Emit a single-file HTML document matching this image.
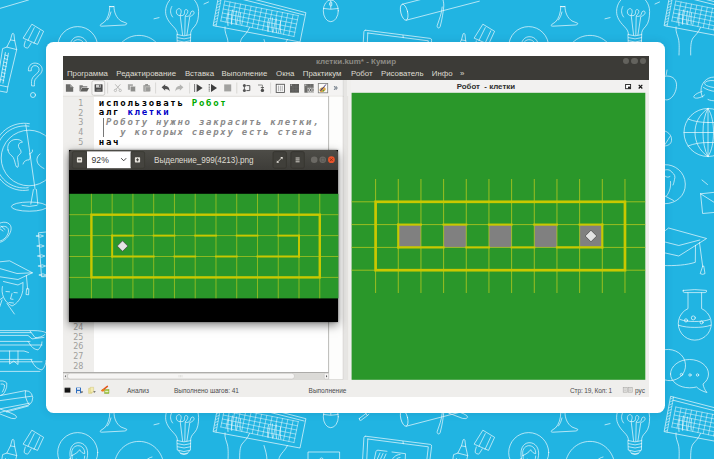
<!DOCTYPE html>
<html lang="ru">
<head>
<meta charset="utf-8">
<title>клетки.kum* - Кумир</title>
<style>
html,body{margin:0;padding:0;}
body{width:714px;height:459px;overflow:hidden;background:#21b4e2;position:relative;font-family:"Liberation Sans","DejaVu Sans",sans-serif;}
.abs{position:absolute;}
#doodles{position:absolute;left:0;top:0;width:714px;height:459px;}
#card{position:absolute;left:46px;top:42px;width:619px;height:371px;background:#fff;border-radius:7.5px;box-shadow:0 0 8px rgba(0,40,80,.13);}
#shot{position:absolute;left:63px;top:56px;width:586px;height:341.2px;background:#efeeec;overflow:hidden;}
/* coordinates inside #shot are page coords minus (63,56) */
#titlebar{position:absolute;left:0;top:0;width:586px;height:12px;background:#3c3b37;}
#title{position:absolute;left:0;top:1px;width:586px;text-align:center;font-size:8px;line-height:10px;color:#8d8b85;font-weight:bold;}
#menubar{position:absolute;left:0;top:12px;width:586px;height:12px;background:#3c3b37;}
#menubar span{position:absolute;top:0;font-size:7.85px;line-height:12px;color:#dfdbd2;white-space:nowrap;}
.wbtn{position:absolute;width:6.4px;height:6.4px;border-radius:50%;background:#63625d;}
#toolbar{position:absolute;left:0;top:24px;width:281px;height:17px;background:#eeedeb;}
#dockgap{position:absolute;left:281px;top:24px;width:8px;height:300px;background:linear-gradient(90deg,#e6e5e3 0,#e6e5e3 3.5px,#f0efed 3.5px);}
#docktitle{position:absolute;left:288px;top:24px;width:298px;height:13px;background:#f2f1f0;}
#docktitle b{position:absolute;left:105.7px;top:0;white-space:nowrap;font-size:7.9px;line-height:13px;color:#2e2e2e;}
#field{position:absolute;left:288.6px;top:36.8px;width:293.7px;height:287px;background:#2a972a;}
#editor{position:absolute;left:0;top:40.5px;width:266px;height:275.9px;background:#fff;}
#gutter{position:absolute;left:0;top:0;width:30.8px;height:276px;background:#efeeec;}
.ln{position:absolute;left:0;width:20.4px;text-align:right;font-family:"DejaVu Sans","Liberation Sans",sans-serif;font-size:8px;line-height:10px;color:#a09f9d;}
.cl{position:absolute;left:35.8px;font-family:"DejaVu Sans Mono","Liberation Mono",monospace;font-weight:bold;font-size:9px;line-height:10px;letter-spacing:1.73px;white-space:pre;color:#000;}
.cl i{color:#8a8a8a;}
.cl .b{color:#0000c8;}
.cl .g{color:#00aa00;}
#statusbar{position:absolute;left:0;top:324px;width:586px;height:17px;background:#efeeec;}
#statusbar span{position:absolute;top:6.2px;font-size:6.5px;line-height:9px;color:#4c4c4c;white-space:nowrap;}
#popup{position:absolute;left:6px;top:94px;width:270px;height:172px;}
#pbg{position:absolute;left:.4px;top:0;width:269px;height:171.8px;background:#000;box-shadow:0 3px 9px rgba(0,0,0,.5),0 0 2px rgba(0,0,0,.45);}
#phead{position:absolute;left:.4px;top:0;width:269px;height:19.5px;background:linear-gradient(#4d4c47,#3d3c38);border-radius:3px 3px 0 0;}
#ptitle{position:absolute;left:84.7px;top:4.6px;font-size:8.2px;line-height:12px;color:#dfdbd2;white-space:nowrap;letter-spacing:-.08px;}
#pgrid{position:absolute;left:0;top:43.8px;width:269px;height:104.6px;background:#2a972a;overflow:hidden;}
</style>
</head>
<body>
<svg id="doodles" viewBox="0 0 714 459" fill="none" stroke="#fff" stroke-width="0.8" stroke-opacity="0.82" stroke-linecap="round" stroke-linejoin="round">
<defs><g id="t">
<!-- marker -->
<path d="M12.4 33.600q1-.9 1.500.500l.8 6.500l2 9l-9.900-2.500l3.600-7.200z"/>
<path d="M10.400 39.900l4.300.7M6.800 47.100l-4.200 1.500l-5.600 36l10.800 2.400l8.900-37.400M-1 85.800l-.8 5l8.800 1.600l.8-5.400M5.400 52.500l-5.400 30M8.400 53.200l-5.400 30"/>
<path d="M5 55l3 1M4.400 58.500l3 1M3.800 62l3 1M3.200 65.500l3 1M2.600 69l3 1M2 72.500l3 1M1.400 76l3 1M.8 79.500l3 1"/>
<!-- usb -->
<path d="M32.200 24.400l11.400 6.900l-6.100 13.100l-14-6.100z"/>
<path d="M34.300 27.600l-6.300 12.600M39.800 30.800l-5.800 12.600M25.300 41l-1.100 4q-.6 2 1.600 2.800q2.200.9 3.200-1.100l2.200-3.900"/>
<!-- question mark -->
<path d="M28.400 70.500c-.6-4 2.600-7.600 6.800-7.400c4.800.2 7.800 4 6.800 8c-.8 3.400-5.400 5.600-7 8.600c-.8 1.600-.6 4.400-.6 6.300l-2.800-.2c-.2-3-.4-5.600 1-8c1.600-2.800 5.800-4.600 6.400-7.200c.6-2.800-1.400-5-4-5c-2.400 0-4.200 2-3.800 4.800z"/>
<circle cx="33" cy="95" r="2.500"/>
<!-- globe -->
<circle cx="29" cy="158" r="27.800"/>
<path d="M29.400 123.700c-16-3-36 8-36.400 33c-.4 24 19 36.500 35.500 33.300M29 126.200c-14-2.400-33 7.500-33.500 30.500c-.5 22 17 33.400 32.700 31"/>
<path d="M25.800 124.600l9.300 64.600M33.400 189.500l-2.600 14.600M36.400 189.500l1.400 14.600"/>
<ellipse cx="29.400" cy="206.600" rx="18" ry="4.600"/><path d="M22 205.400q7 2.200 15 0"/>
<path d="M8 150c-1.500-5 2-10 7-10.500c3-.4 6 .5 7.500 2.500c-3 .5-4.500 2-4 4.500c.5 2.500 3 3.500 2.500 6c-.5 2-3.500 2.500-3.500 5c0 3 1.500 7 .5 9.500c-1 1-2-.5-2.500-2.500c-.8-3-1.500-7-3.500-8.500c-2-1.500-3.500-3-4-6z"/>
<path d="M23 164c1-3 3.500-4.500 6-4c1.500-2 1.500-4.500.5-6.500c2 0 3.500-1.500 3-3.500M40 154c-3 2-4 6-2 9.500c1.500 2.500 4 4 6 5"/>
<!-- mug -->
<path d="M-4 226c4-5 12-5 14.500-.5c2 4-1 10.500-6 14.500c-3 2.400-7 3.400-9.500 2M-2 229c3-3.500 8-3.500 10-.5c1.500 3-.5 7.500-4 10.500c-2 1.600-4.500 2.400-6.500 2M-1 228l4 3M1 226l4 3.500"/>
<!-- spiral notebook -->
<path d="M46 232l-7.500.8l3 44l4.500-.2M36.500 236q4-2.500 7 0q-3 2.500-7 0zM37.200 246q4-2.500 7 0q-3 2.500-7 0zM37.900 256q4-2.500 7 0q-3 2.500-7 0zM38.600 266q4-2.500 7 0q-3 2.500-7 0zM39.300 275q4-2.500 7 0q-3 2.500-7 0z"/>
<!-- graduate -->
<path d="M-2 262l11.600-1.200l22.800 12l-14.400 6.700l-20-3M-2 268l19 5.500l15.400-.7M26.400 275.500l1.200 13.500M26.600 289l-.6 5.500l2.600.3l.2-5.600z"/>
<path d="M2.400 286.500c-1.500 7 1.500 15.500 9.600 19.500c5.500-2.500 9.500-8 10.800-15.500l.2-7.500M3.500 281.500l14.500 3.500l5-2.500M6 291.500l3.500.3M14 292.500l3.300.3M12 293.500l-1.500 5.500l2.500.3M9 302.500l4.500.5M7 303.500l7.400 10.500M3 297.500l-5 3.500M2 300l-4 12"/>
<!-- books -->
<path d="M-2 330.600h36c5 0 10 .8 12 2M-2 335.400h30l4 3.500l12-1.500M-2 332.600h33M30 331l5 6.500c3 .5 8-1 10-3M-2 341.400h32M-2 345h44M28 341.400c2.500 3 3.500 7.500 10 8.500c2.500-2.500 4-5 4-8M-2 351h26l4.500 1.500M-2 359.400h34M-2 361.800h44M-2 371.400h42M31 359.400c2 4.500 5 9.500 11 10.500c2.500-2.400 4-6 4-9.500M9.600 351v13l4.200-3l4.200 3.500v-13.500"/>
<!-- telescope end -->
<path d="M-2 396l27-5.300q4.500-.2 6.500 3q2.200 3.500.6 7.500q-1.200 2.600-3.300 3.800l-30.800 8M-2 400.900l33.600-4.700M-2 409.200l31.400-6M6.500 412l21.800-6M25.500 391q-1.500 6 3.500 13.500M-2 381.500q5.500-2 8.800 1.500q.8 4-2.300 9.500q-1.500 2.800-3.500 2.800M1 384q2.500-.5 3.500 1q.3 3-2 7"/>
<!-- face circle -->
<circle cx="77.700" cy="46.600" r="20"/>
<path d="M70.500 52.500c-2-8 1-15.500 7.500-15.800c6.500-.3 10.500 5.500 9.500 13c-.5 4-2 9-4.500 12.500M72 49.500c-1.500-5 1.500-9.500 5.500-9.800c4.500-.3 7.500 3.500 7.200 8c-2.500-.5-4-2-5-4c-2 3-5 4.500-7.700 5.800zM72 49.500c0 5 1.500 10.500 6 14.500c3.500-2 6-7 6.700-14M70.500 52.500q-2-.5-1.600 2q.6 2.500 2.600 2.500M76.200 53l-.6 4l1.800.2M74 60l4 .5"/>
<!-- lamp / goblet -->
<path d="M109.800 6.500h4.200c0 6 2.500 11.500 7 14.500l5.600 2.200c.5 1-.5 1.500-2 1.800l-23 1.200c-1.500 0-2-1-.8-1.800l3.600-2.400c3.500-3.500 5.400-9.500 5.400-15.500zM109.800 6.500q2 .8 4.200 0M111 12q-1 5-3.500 8"/>
<path d="M154 18.800l5-1.200M204 4l4.500-2"/>
<!-- big circle arc -->
<path d="M114 60c1-14 11.500-24.600 25-24.600s24 10.600 25 24.600M143 60c1-4.500 4.500-8 9-9"/>
<!-- bulb -->
<path d="M177.400 34.600c.2-3.500-1.600-5.400-4.400-8.400c-4.500-4.800-7.400-9-7.400-14.700c0-8 5-14 11-16.500M190.600 34.600c-.2-3.500 1.400-5.400 4.200-8.400c3-3.300 3.800-9 3.800-14.700c0-8-5-14-11-16.500"/>
<path d="M171.800 6.500c-2 3.500-1.600 7.500.8 10.500M182.600 35l-2.400-19.500c-2.500.3-4.200-1.700-3.800-4.200c.4-2.600 3-3.500 4.300-1.800c1.300 2-.2 4.500-.5 6c2.800.8 4.600-.8 4.300-3.300c-.3-2.300 1.600-3.400 2.900-2.100c1.300 1.700-.6 4.200-2.300 5.800c2.500 1.300 5 0 5.500-2.900c.4-2.100 2.500-2.600 3.300-1.300c.9 2.100-1.600 4.300-4.100 4.700l-2.900 18.600M184.800 35l.4-18.500"/>
<path d="M177.300 34.600q6.800 2.600 13.400 0l-.3 9.600q-6.400 2.800-12.800 0zM177.500 37.700q6.600 2.500 13.100 0M177.600 40.800q6.500 2.500 12.900 0M178.800 45c1.500 4.800 9 4.800 10.600-.2M180.500 47.200q3.500 1.400 7 0"/>
<!-- keyboard -->
<path d="M220 -9.6L305.9 12.7L300 42L213.5 25.7z"/>
<path d="M222 -5.8L304.1 15"/>
<path d="M224.8 1L298.3 15.6M224 5L297.4 19.8M223.2 9L296.6 24M222.4 13L295.7 28.1M221.6 17L294.9 32.3M220.8 21L294 36.5M224.8 1L220.8 21M230.1 2L226 22.1M235.3 3.1L231.3 23.2M240.6 4.1L236.5 24.3M245.8 5.2L241.7 25.4M251.1 6.2L246.9 26.5M256.3 7.3L252.2 27.6M261.6 8.3L257.4 28.8M266.8 9.3L262.6 29.9M272.1 10.4L267.9 31M277.3 11.4L273.1 32.1M282.6 12.5L278.3 33.2M287.8 13.5L283.5 34.3M293.1 14.6L288.8 35.4M298.3 15.6L294 36.5" stroke-width=".6"/>
<path d="M222.6 -8.9L216.1 26.3M219.8 -7.1l2.6 -1.2M219.3 -4.2l2.6 -1.2M218.8 -1.2l2.6 -1.2M218.2 1.7l2.6 -1.2M217.7 4.6l2.6 -1.2M217.1 7.6l2.6 -1.2M216.6 10.5l2.6 -1.2M216 13.5l2.6 -1.2M215.5 16.4l2.6 -1.2M215 19.4l2.6 -1.2M214.4 22.3l2.6 -1.2M213.9 25.2l2.6 -1.2" stroke-width=".6"/>
<!-- hands -->
<path d="M225 27c-.5 5 1.500 8 2.500 12c.8 4 .8 8 .5 16M229 12c-1.200 4-1.500 9-1 13.500M232.500 10c-1 4-1.200 9-.8 14.500M236.500 11c-.8 4-1 8.500-.6 13M240.500 13c-.6 3.500-.6 7-.3 11M249.500 27.500c-2 5-5 7.500-7.500 10.500c-2 3-2.500 8-2.300 17M264 39.500c1.500 5 3 9.500 3 15.500M268.500 19c-1 4-1 8.500-.4 12.500M272.500 18c-.8 4.500-.8 9 0 14M276.500 19c-.8 4.500-.6 9 0 13.500M280.500 21.500c-.5 4-.3 8 .3 11.500M287.500 39.500c-2.500 5-6 7.500-7.500 10.500c-1 2-1.200 3-1.200 5"/>
<!-- mouse -->
<ellipse cx="330.800" cy="10.800" rx="7.500" ry="10.900"/><path d="M323.400 8.500q7.400 1.600 14.800 0M330.800 0v8.800M329.800 2.500q1-1.500 2 0v3q-1 1.500-2 0z"/>
<path d="M308 55v-9h31.600v9M320 52.500q1.500-1.500 3 0"/>
<!-- telescope -->
<ellipse cx="404.200" cy="12.200" rx="3.400" ry="8.200" transform="rotate(-14 404.200 12.200)"/>
<path d="M402.400 4.200l38-9.700M406.300 20.200l73-19M440.200-6c2 2 4 8 3.500 13c-.5 5-1.500 12-3.500 19.500c-.8 2.500-3.500 1.500-3-1c2-6 4.500-12 5-18.500"/>
<!-- tablet -->
<path d="M365.500 30.200l64.800 8.200q1.500.3 1.300 2l-2 16M365.500 30.200q-1.500 0-1.600 1.500l-1.500 25M367.800 33l60.500 7.800l-1.800 16M367.800 33l-1.200 24M403 35.500l.3 2.200M373.500 57l2.500-11.500q.5-1.500 2-1.300l9 1.100M392 46l13.500 1.700l-.5 9.300M376 56l4-9M379 56.500l4-9M382 57l4-9M391 57c1-5 4.500-8.500 9-8.500M394 57c1-3 3-5.500 6-5.500"/>
<!-- apple arc -->
<path d="M214 76.200c6-1 11 2 11.500 8c.5 6.500-3.500 14-8.500 15.500c-1.500.4-2.500.2-3.500-.3M216 70l-.8 5"/>
<!-- planet -->
<path d="M251.500 97c-3-6-1.500-13.500 4-17.500c3-2.200 6.500-2.800 9.500-2.200M257 99.500c2 1 5 1.500 8 1.200M264.500 81c-3.500-1-7.500-.5-10 1c-1.500 1-1 2.500 1 3.500c2.500 1.200 6 2 9.500 2.200M251 91.500c-3.500 1-6.500 2.500-8 4.500c-1 1.800 1.500 2.500 4 2c2.500-.5 5-1.500 6.500-3M252.500 87.500c3 2 7 3.500 12 4"/>
<!-- wire globe -->
<circle cx="257" cy="132.500" r="24"/>
<path d="M257 108.500c-9 6-13 15-13 24s4 18 13 24M257 108.500c-3.500 6-5 15-5 24s1.500 18 5 24M257 108.500v48M237 119c6 2.500 13 3.500 20 3.500M233 132.500h32M237 146c6-2.500 13-3.500 20-3.500M257 108.500c4 6 5.500 15 5.500 24s-1.500 18-5.500 24M257 122.500h8M257 142.500h8"/>
<!-- leaf -->
<path d="M214 131c4 1.500 7 5 6.500 9.500c-.3 3-2.500 5-6.500 5.500M214 144.500l5-8"/>
<!-- face circle right -->
<path d="M214 164.700c9.500-.5 20 7 20.300 19.300c.3 12-9.500 19.700-20.300 19.700M214 170c2.500-1 6 0 7.500 3c2 1 3 3.500 2 6.500c-.5 2-.5 3.500-1.500 5.500M214 196l8.500 4.500M214 176c1.500 1.500 3.500 1.500 5 .5M219.500 181.500c.5 5-.5 10-4 14.500"/>
<path d="M251 180l5.500 4.500"/>
<!-- envelope -->
<path d="M249.600 193.800l15-1.600M249.600 193.800l2 19.700l13.400-1.200M249.600 193.800l15 9.500"/>
<!-- grad cap -->
<path d="M212 232.300l5.600-4.300l38 10.500l-27.800 17.500l-15.800-3.500M212 241.500l15.800 4l21-5.500M212 265.500c12 .5 24-.5 32.300-3.200l.2-17M248.500 242.500l3.200 24M251.600 266.400l-2.400 7.200q2.500 1.500 4.800 0l-1.200-7.200z"/>
<!-- flask -->
<path d="M232.2 290.4q11.6-1.600 23.200 0q1 1.800-1.400 2.200h-3.400v16a16.500 16.500 0 1 1-13.600 0v-16h-3.400q-2.400-.4-1.400-2.200zM237 292.600h13.600M227.500 325.200c5 1.800 11 2.200 16.300 2.200s11-.4 16.300-2.200M229 319.500c4.500 1.600 9.500 2 14.800 2s10.300-.4 14.800-2"/>
<circle cx="235" cy="320.400" r="1.600"/><circle cx="242.300" cy="317.900" r="2"/><circle cx="250.600" cy="322.400" r="1.500"/>
<!-- bubbles -->
<path d="M214 349.600c10-1.500 20 5 20.500 15c.4 9-6.500 15.500-15 16c-2 .1-3.800-.2-5.500-.7"/>
<path d="M219.500 374c0-8 8.500-14.500 19-14.500s19 6.500 19 14.500c0 4-2 7.500-5.500 10c.5 3 2 6.500 4 8.500c-4-1-8-3-10.500-5.500c-2.200.5-4.500.8-7 .8c-10.500 0-19-6-19-13.800z"/>
<circle cx="230.500" cy="374.500" r="1.200"/><circle cx="239" cy="375" r="1.200"/><circle cx="246.500" cy="375" r="1.200"/>
</g></defs>
<use href="#t"/><use href="#t" x="451"/><use href="#t" y="406"/><use href="#t" x="451" y="406"/><path d="M0 8.4l28.500-8.400"/>
<g id="cap"><path d="M-2 408.2l14 5.3q4.5 1.8 4.7 3.7q-.8 2.3-5.2 1.2l-13.5-5.2"/></g>
<use href="#cap" x="451"/>
<path d="M359.4 418.4l6.400-4.800l1.500 2l-6.400 4.800q-2 .6-1.500-2zM365.800 413.600l1-.8M367.300 415.600l1.600-1.400"/>

</svg>
<div id="card"></div>
<div id="shot">
  <div id="titlebar"></div>
  <div id="title">клетки.kum* - Кумир</div>
  <div class="wbtn" style="left:559.7px;top:1.6px"></div>
  <div class="wbtn" style="left:568.3px;top:1.6px"></div>
  <div class="wbtn" style="left:576.9px;top:1.6px"></div>
  <div id="menubar">
    <span style="left:3.9px">Программа</span>
    <span style="left:53.3px">Редактирование</span>
    <span style="left:121.9px">Вставка</span>
    <span style="left:158.6px">Выполнение</span>
    <span style="left:213.1px">Окна</span>
    <span style="left:239.8px">Практикум</span>
    <span style="left:288px">Робот</span>
    <span style="left:318px">Рисователь</span>
    <span style="left:368.8px">Инфо</span>
    <span style="left:396.9px">»</span>
  </div>
  <div id="toolbar">
  <svg class="abs" style="left:0;top:0" width="281" height="17" viewBox="63 80 281 17">
<rect x="63" y="80" width="281" height="16.500" fill="#f4f3f2"/>
<path d="M63 96.300H343.500" stroke="#dcdbd8" stroke-width=".7"/>
<path d="M343.300 80V97" stroke="#d2d1ce" stroke-width=".8"/>
<!-- new -->
<path d="M65.9 84.2h4.3l3 3v4.6h-7.3z" fill="#6a6a68"/><path d="M70.2 84.2v3h3z" fill="#a5a5a3"/>
<!-- open -->
<path d="M79.5 85.2h3l.8 1h4v1.4h-5.6l-1.6 3.6h-.6z" fill="#7a7a78"/><path d="M82 88h7l-1.9 3.6h-7z" fill="#5e5e5c"/>
<!-- save button -->
<rect x="91.9" y="80.7" width="12.8" height="14.6" rx="1.8" fill="#f7f6f5" stroke="#c4c3c0" stroke-width=".8"/>
<rect x="94.6" y="84.2" width="8" height="7.6" rx=".6" fill="#4a4a4a"/><rect x="96" y="84.6" width="4.8" height="3" fill="#d0d0d0"/><rect x="96.4" y="89.2" width="4.4" height="2.6" fill="#777"/><rect x="99.2" y="85" width="1" height="2.2" fill="#555"/>
<path d="M107.6 82.5V93.5" stroke="#d6d5d2" stroke-width=".9"/>
<!-- cut -->
<path d="M115.2 84.3l4.6 5.2M120.4 84.3l-4.6 5.2" stroke="#b2b2b0" stroke-width=".9" fill="none"/><circle cx="115.4" cy="90.4" r="1.2" fill="none" stroke="#b2b2b0" stroke-width=".8"/><circle cx="120.2" cy="90.4" r="1.2" fill="none" stroke="#b2b2b0" stroke-width=".8"/>
<!-- copy -->
<rect x="127.9" y="84.2" width="5" height="5.6" fill="#aaaaa8"/><rect x="130.3" y="86.2" width="5.2" height="5.6" fill="#8e8e8c" stroke="#f4f3f2" stroke-width=".5"/>
<!-- paste -->
<rect x="143.2" y="85" width="6.8" height="6.8" rx=".8" fill="#aaaaa8"/><rect x="145.2" y="84" width="2.8" height="2" fill="#979795"/><rect x="145.8" y="87" width="4.6" height="4.2" fill="#9a9a98" stroke="#d0d0ce" stroke-width=".4"/>
<path d="M155.6 82.5V93.5" stroke="#d6d5d2" stroke-width=".9"/>
<!-- undo -->
<path d="M161.6 87.2l3.6-3v1.9c2.6 0 4.4 1.6 4.4 5.4c-.9-2-2.2-2.6-4.4-2.6v1.9z" fill="#505050"/>
<!-- redo -->
<path d="M183.4 87.2l-3.6-3v1.9c-2.6 0-4.4 1.6-4.4 5.4c.9-2 2.2-2.6 4.4-2.6v1.9z" fill="#b4b4b2"/>
<path d="M189.6 82.5V93.5" stroke="#d6d5d2" stroke-width=".9"/>
<!-- run -->
<path d="M194.6 84V92" stroke="#666" stroke-width=".9"/><path d="M196.6 84l6 4l-6 4z" fill="#3e3e3e"/>
<!-- step run -->
<path d="M209.3 84V92" stroke="#777" stroke-width="1.3" stroke-dasharray="1 .6"/><path d="M211 84l6 4l-6 4z" fill="#3e3e3e"/>
<!-- stop -->
<rect x="224.2" y="84.4" width="7" height="7" fill="#a2a2a0"/>
<path d="M236.8 82.5V93.5" stroke="#d6d5d2" stroke-width=".9"/>
<!-- step over -->
<circle cx="244.4" cy="85.6" r="1.5" fill="#555"/><circle cx="244.4" cy="90.6" r="1.5" fill="#555"/><path d="M244.4 85V91" stroke="#555" stroke-width=".9"/><path d="M246.4 85.6h3.4v5h-3.4" stroke="#555" stroke-width="1" fill="none"/>
<!-- step out -->
<path d="M258 85h4.4v6" stroke="#8a8a88" stroke-width="1" fill="none"/><circle cx="262.4" cy="90.4" r="1.7" fill="#4c4c4c"/><path d="M260.8 87.6h3.2" stroke="#4c4c4c" stroke-width=".9"/>
<path d="M270.6 82.5V93.5" stroke="#d6d5d2" stroke-width=".9"/>
<!-- grid1 -->
<rect x="276.2" y="84.3" width="8.2" height="8.1" fill="#fff" stroke="#555" stroke-width=".9"/><path d="M278.4 85.6V91.2M280.3 85.6V91.2M282.2 85.6V91.2" stroke="#777" stroke-width=".6"/>
<!-- grid2 -->
<rect x="290" y="84" width="9" height="8.7" fill="#5a5a58"/><path d="M293 84V92.7M296 84V92.7M290 87H299M290 90H299" stroke="#777775" stroke-width=".4"/><rect x="290.6" y="84.6" width="1.4" height="1" fill="#ddd"/>
<!-- grid3 -->
<rect x="304.4" y="84" width="9.2" height="8.7" fill="#6a6a68"/><path d="M307.4 84V92.7M310.4 84V92.7M304.4 87H313.6" stroke="#8a8a88" stroke-width=".4"/><rect x="305" y="84.6" width="1.4" height="1" fill="#ddd"/><rect x="307.6" y="87.8" width="6" height="4.9" fill="#d9d9d7"/><circle cx="309.4" cy="90" r="1.3" fill="none" stroke="#444" stroke-width=".6"/><circle cx="311.9" cy="90" r="1.3" fill="none" stroke="#444" stroke-width=".6"/>
<!-- painter -->
<rect x="318.3" y="83.4" width="9.4" height="9.4" fill="#fbfaf8" stroke="#7c7c7a" stroke-width=".8"/><ellipse cx="322.6" cy="89.6" rx="3.2" ry="2.2" fill="#d9a648" transform="rotate(-25 322.6 89.6)"/><path d="M320.4 91l5.6-6.6" stroke="#4a3a7a" stroke-width="1"/><circle cx="323.4" cy="90.8" r=".7" fill="#3aa03a"/><circle cx="321.4" cy="89" r=".6" fill="#2a3a9a"/>
<!-- more -->
<path d="M334.2 86.2l1.3 1.8l-1.3 1.8M335.9 86.2l1.3 1.8l-1.3 1.8" stroke="#345" stroke-width=".8" fill="none"/>
</svg>

  </div>
  <div id="dockgap"></div>
  <div id="docktitle"><b>Робот&nbsp; - клетки</b>
  <svg class="abs" style="left:0;top:0" width="298" height="13" viewBox="351 80 298 13">
<rect x="625.600" y="84.500" width="5" height="4.200" fill="#fff" stroke="#222" stroke-width=".9"/><rect x="628" y="86.600" width="2.600" height="2.100" fill="#222"/>
<path d="M638.700 84.900l3.600 3.600M642.300 84.900l-3.600 3.600" stroke="#111" stroke-width="1.150"/>
</svg>

  </div>
  <svg class="abs" style="left:288px;top:36px" width="296" height="290" viewBox="351 92 296 290">
<rect x="351.6" y="92.8" width="293.7" height="287" fill="#2a972a"/>
<rect x="398.27" y="224.6" width="22.67" height="22.8" fill="#808080"/>
<rect x="443.61" y="224.6" width="22.67" height="22.8" fill="#808080"/>
<rect x="488.95" y="224.6" width="22.67" height="22.8" fill="#808080"/>
<rect x="534.29" y="224.6" width="22.67" height="22.8" fill="#808080"/>
<rect x="579.63" y="224.6" width="22.67" height="22.8" fill="#808080"/>
<path d="M351.6 201.8H645.3" stroke="#c3cc1e" stroke-width="0.8" stroke-opacity=".92"/>
<path d="M351.6 224.6H645.3" stroke="#c3cc1e" stroke-width="0.8" stroke-opacity=".92"/>
<path d="M351.6 247.4H645.3" stroke="#c3cc1e" stroke-width="0.8" stroke-opacity=".92"/>
<path d="M351.6 270.2H645.3" stroke="#c3cc1e" stroke-width="0.8" stroke-opacity=".92"/>
<path d="M375.6 179V293" stroke="#c3cc1e" stroke-width="0.8" stroke-opacity=".92"/>
<path d="M398.27 179V293" stroke="#c3cc1e" stroke-width="0.8" stroke-opacity=".92"/>
<path d="M420.94 179V293" stroke="#c3cc1e" stroke-width="0.8" stroke-opacity=".92"/>
<path d="M443.61 179V293" stroke="#c3cc1e" stroke-width="0.8" stroke-opacity=".92"/>
<path d="M466.28 179V293" stroke="#c3cc1e" stroke-width="0.8" stroke-opacity=".92"/>
<path d="M488.95 179V293" stroke="#c3cc1e" stroke-width="0.8" stroke-opacity=".92"/>
<path d="M511.62 179V293" stroke="#c3cc1e" stroke-width="0.8" stroke-opacity=".92"/>
<path d="M534.29 179V293" stroke="#c3cc1e" stroke-width="0.8" stroke-opacity=".92"/>
<path d="M556.96 179V293" stroke="#c3cc1e" stroke-width="0.8" stroke-opacity=".92"/>
<path d="M579.63 179V293" stroke="#c3cc1e" stroke-width="0.8" stroke-opacity=".92"/>
<path d="M602.3 179V293" stroke="#c3cc1e" stroke-width="0.8" stroke-opacity=".92"/>
<path d="M624.97 179V293" stroke="#c3cc1e" stroke-width="0.8" stroke-opacity=".92"/>
<rect x="375.6" y="201.8" width="249.37" height="68.4" fill="none" stroke="#c9c800" stroke-width="2.7"/>
<path d="M398.27 224.6L420.94 224.6" stroke="#c9c800" stroke-width="2.1" stroke-linecap="square"/>
<path d="M443.61 224.6L466.28 224.6" stroke="#c9c800" stroke-width="2.1" stroke-linecap="square"/>
<path d="M488.95 224.6L511.62 224.6" stroke="#c9c800" stroke-width="2.1" stroke-linecap="square"/>
<path d="M534.29 224.6L556.96 224.6" stroke="#c9c800" stroke-width="2.1" stroke-linecap="square"/>
<path d="M579.63 224.6L602.3 224.6" stroke="#c9c800" stroke-width="2.1" stroke-linecap="square"/>
<path d="M398.27 247.4L443.61 247.4" stroke="#c9c800" stroke-width="2.1" stroke-linecap="square"/>
<path d="M466.28 247.4L488.95 247.4" stroke="#c9c800" stroke-width="2.1" stroke-linecap="square"/>
<path d="M511.62 247.4L534.29 247.4" stroke="#c9c800" stroke-width="2.1" stroke-linecap="square"/>
<path d="M556.96 247.4L602.3 247.4" stroke="#c9c800" stroke-width="2.1" stroke-linecap="square"/>
<path d="M398.27 224.6L398.27 247.4" stroke="#c9c800" stroke-width="2.1" stroke-linecap="square"/>
<path d="M602.3 224.6L602.3 247.4" stroke="#c9c800" stroke-width="2.1" stroke-linecap="square"/>
<path d="M590.96 230.2l5.8 5.8l-5.8 5.8l-5.8 -5.8z" fill="#e4e4e4" stroke="#444" stroke-width="0.7"/>
</svg>
  <div id="editor">
    <div id="gutter"></div>
    <div class="ln" style="top:2.3px">1</div>
<div class="ln" style="top:12.04px">2</div>
<div class="ln" style="top:21.79px">3</div>
<div class="ln" style="top:31.53px">4</div>
<div class="ln" style="top:41.28px">5</div>
<div class="ln" style="top:226.44px">24</div>
<div class="ln" style="top:236.18px">25</div>
<div class="ln" style="top:245.92px">26</div>
<div class="ln" style="top:255.67px">27</div>
<div class="ln" style="top:265.41px">28</div>
<div class="cl" style="top:1.1px">использовать <span class="g">Робот</span></div>
<div class="cl" style="top:10.84px">алг <span class="b">клетки</span></div>
<div class="cl" style="top:20.59px"> <i>Роботу нужно закрасить клетки,</i></div>
<div class="cl" style="top:30.33px">   <i>у которых сверху есть стена</i></div>
<div class="cl" style="top:40.08px">нач</div>
<div class="abs" style="left:39.6px;top:21.19px;width:0.7px;height:19px;background:#777"></div>
  </div>
  <svg class="abs" style="left:0;top:40px" width="290" height="286" viewBox="63 96 290 286">
<rect x="329" y="96.500" width="14" height="283.500" fill="#fdfdfc"/>
<path d="M328.600 96V379.500" stroke="#b3b2af" stroke-width=".9"/>
<path d="M343.200 96V379.600H329" stroke="#d2d1ce" stroke-width=".8" fill="none"/>
<path d="M347.600 96V380" stroke="#dfdedb" stroke-width=".7"/>
<rect x="63" y="372.800" width="265.600" height="6.600" fill="#dbdad7"/>
<path d="M63 372.500H328.600" stroke="#a5a4a1" stroke-width=".9"/>
<path d="M63 379.600H329" stroke="#d2d1ce" stroke-width=".7"/>
<rect x="67.400" y="373.300" width="227.200" height="5.700" rx="2.800" fill="#f6f5f4" stroke="#c2c1be" stroke-width=".6"/>
<path d="M179 375v2.300M180.500 375v2.300M182 375v2.300" stroke="#cfcecb" stroke-width=".5"/>
<rect x="63.300" y="373.300" width="3.800" height="5.700" rx="1" fill="#f2f1f0" stroke="#c2c1be" stroke-width=".5"/>
<path d="M65.900 375l-1.200 1.200l1.200 1.200z" fill="#555"/>
<rect x="324.300" y="373.300" width="4.300" height="5.700" rx="1" fill="#f6f5f4" stroke="#c2c1be" stroke-width=".5"/>
<path d="M326 375l1.300 1.200l-1.300 1.200z" fill="#444"/>
<circle cx="262.500" cy="381.300" r=".5" fill="#bbb"/>
</svg>

  <div id="statusbar">
    <span style="left:64px">Анализ</span>
    <span style="left:111px">Выполнено шагов: 41</span>
    <span style="left:245.6px">Выполнение</span>
    <span style="left:507px;letter-spacing:-.13px">Стр: 19, Кол: 1</span>
    <span style="left:572px">рус</span>
    <svg class="abs" style="left:0;top:0" width="60" height="17" viewBox="63 380 60 17">
<rect x="64.600" y="387.700" width="5.800" height="4.900" fill="#111"/><rect x="65.200" y="388.300" width="4.600" height="1" fill="#333"/>
<rect x="76" y="387.500" width="5" height="5.800" rx=".5" fill="#2f6fc0"/><rect x="77" y="387.800" width="3" height="2" fill="#dfe8f5"/><rect x="77" y="391" width="3" height="2.300" fill="#e8e8e8"/><path d="M80.600 391.600h2.600l-1.300 1.600z" fill="#444"/>
<path d="M88.600 388.400h3.200v5h-3.200z" fill="#efe6a0" stroke="#c9bc62" stroke-width=".4"/><path d="M90.200 387.300h3.400v5h-3.400z" fill="#f3ecb4" stroke="#c9bc62" stroke-width=".4"/><path d="M93.200 391.200h2.600l-1.300 1.600z" fill="#555"/>
<rect x="104.600" y="389.500" width="4.400" height="4" fill="#9bc43a" stroke="#7b9f25" stroke-width=".4"/><rect x="105.200" y="390.800" width="3.200" height="1.400" fill="#e8f0c8"/><path d="M102 390.600l5.400-4.200" stroke="#e2571c" stroke-width="1.500" stroke-linecap="round"/><circle cx="103" cy="390.300" r="1.300" fill="#ef7d1a"/>
</svg>
<svg class="abs" style="left:559px;top:6px" width="12" height="8" viewBox="0 0 12 8"><rect x="1.200" y="1.600" width="4" height="4.600" fill="#e4e3e1" stroke="#a9a8a6" stroke-width=".6"/><rect x="6.200" y="1.600" width="4" height="4.600" fill="#e4e3e1" stroke="#a9a8a6" stroke-width=".6"/><path d="M2.200 3h2M2.200 4.600h2M7.200 3h2M7.200 4.600h2" stroke="#b5b4b2" stroke-width=".5"/></svg>

  </div>
  <div id="popup">
    <div id="pbg"></div>
    <div id="phead">
      <div id="ptitle">Выделение_999(4213).png</div>
      <svg class="abs" style="left:-.4px;top:0" width="270" height="20" viewBox="69 150 270 20">
<!-- zoom out button -->
<rect x="72.3" y="151.6" width="14.6" height="16.6" rx="1.6" fill="#45443f" stroke="#36352f" stroke-width=".6"/>
<rect x="76.9" y="157.2" width="5.2" height="5.2" rx=".7" fill="#e4e1da"/><path d="M78 159.8h3" stroke="#3c3b37" stroke-width=".9"/>
<!-- combobox -->
<rect x="87" y="151.4" width="43.8" height="16.8" fill="#fff"/>
<path d="M121.2 158.2l2.5 2.6l2.5 -2.6" stroke="#333" stroke-width=".9" fill="none"/>
<!-- zoom in button -->
<rect x="131" y="151.6" width="13.6" height="16.6" rx="1.6" fill="#45443f" stroke="#36352f" stroke-width=".6"/>
<rect x="134.9" y="157.2" width="5.2" height="5.2" rx=".7" fill="#e4e1da"/><path d="M136 159.8h3M137.5 158.3v3" stroke="#3c3b37" stroke-width=".9"/>
<!-- fullscreen -->
<rect x="273" y="151.6" width="13.4" height="16.6" rx="1.6" fill="#403f3a" stroke="#33322d" stroke-width=".7"/>
<path d="M277.2 162.4l5-5" stroke="#e4e1da" stroke-width=".9"/><path d="M280.2 157h2.4v2.4zM276.8 160.400v2.4h2.400z" fill="#e4e1da"/>
<!-- menu -->
<rect x="290.9" y="151.600" width="13.4" height="16.600" rx="1.600" fill="#403f3a" stroke="#33322d" stroke-width=".7"/>
<path d="M295.6 158h4M295.600 159.900h4M295.600 161.800h4" stroke="#e4e1da" stroke-width=".9"/>
<!-- window buttons -->
<circle cx="314.2" cy="159.700" r="3.300" fill="#6b6964"/>
<circle cx="322.7" cy="159.700" r="3.300" fill="#6b6964"/><rect x="321.200" y="158.200" width="3" height="3" fill="none" stroke="#55534e" stroke-width=".6"/>
<circle cx="331.4" cy="159.700" r="3.400" fill="#e8542c"/><path d="M330 158.300l2.800 2.800M332.800 158.300l-2.800 2.800" stroke="#7a2a12" stroke-width=".8"/>
</svg>
<div class="abs" style="left:22.2px;top:4.2px;font-size:8.6px;line-height:12px;color:#333;">92%</div>

    </div>
    <svg class="abs" style="left:0;top:43px" width="270" height="106" viewBox="69 193 270 106">
<rect x="69.4" y="193.8" width="269" height="104.6" fill="#2a972a"/>
<path d="M69.4 214.7H338.4" stroke="#c3cc1e" stroke-width="0.75" stroke-opacity=".85"/>
<path d="M69.4 235.6H338.4" stroke="#c3cc1e" stroke-width="0.75" stroke-opacity=".85"/>
<path d="M69.4 256.5H338.4" stroke="#c3cc1e" stroke-width="0.75" stroke-opacity=".85"/>
<path d="M69.4 277.4H338.4" stroke="#c3cc1e" stroke-width="0.75" stroke-opacity=".85"/>
<path d="M91.41 193.8V298.3" stroke="#c3cc1e" stroke-width="0.75" stroke-opacity=".85"/>
<path d="M112.17 193.8V298.3" stroke="#c3cc1e" stroke-width="0.75" stroke-opacity=".85"/>
<path d="M132.93 193.8V298.3" stroke="#c3cc1e" stroke-width="0.75" stroke-opacity=".85"/>
<path d="M153.69 193.8V298.3" stroke="#c3cc1e" stroke-width="0.75" stroke-opacity=".85"/>
<path d="M174.45 193.8V298.3" stroke="#c3cc1e" stroke-width="0.75" stroke-opacity=".85"/>
<path d="M195.21 193.8V298.3" stroke="#c3cc1e" stroke-width="0.75" stroke-opacity=".85"/>
<path d="M215.97 193.8V298.3" stroke="#c3cc1e" stroke-width="0.75" stroke-opacity=".85"/>
<path d="M236.73 193.8V298.3" stroke="#c3cc1e" stroke-width="0.75" stroke-opacity=".85"/>
<path d="M257.49 193.8V298.3" stroke="#c3cc1e" stroke-width="0.75" stroke-opacity=".85"/>
<path d="M278.25 193.8V298.3" stroke="#c3cc1e" stroke-width="0.75" stroke-opacity=".85"/>
<path d="M299.01 193.8V298.3" stroke="#c3cc1e" stroke-width="0.75" stroke-opacity=".85"/>
<path d="M319.77 193.8V298.3" stroke="#c3cc1e" stroke-width="0.75" stroke-opacity=".85"/>
<rect x="91.41" y="214.7" width="228.36" height="62.7" fill="none" stroke="#c9c800" stroke-width="2.4"/>
<path d="M112.17 235.6L132.93 235.6" stroke="#c9c800" stroke-width="1.9" stroke-linecap="square"/>
<path d="M153.69 235.6L174.45 235.6" stroke="#c9c800" stroke-width="1.9" stroke-linecap="square"/>
<path d="M195.21 235.6L215.97 235.6" stroke="#c9c800" stroke-width="1.9" stroke-linecap="square"/>
<path d="M236.73 235.6L257.49 235.6" stroke="#c9c800" stroke-width="1.9" stroke-linecap="square"/>
<path d="M278.25 235.6L299.01 235.6" stroke="#c9c800" stroke-width="1.9" stroke-linecap="square"/>
<path d="M112.17 256.5L153.69 256.5" stroke="#c9c800" stroke-width="1.9" stroke-linecap="square"/>
<path d="M174.45 256.5L195.21 256.5" stroke="#c9c800" stroke-width="1.9" stroke-linecap="square"/>
<path d="M215.97 256.5L236.73 256.5" stroke="#c9c800" stroke-width="1.9" stroke-linecap="square"/>
<path d="M257.49 256.5L299.01 256.5" stroke="#c9c800" stroke-width="1.9" stroke-linecap="square"/>
<path d="M112.17 235.6L112.17 256.5" stroke="#c9c800" stroke-width="1.9" stroke-linecap="square"/>
<path d="M299.01 235.6L299.01 256.5" stroke="#c9c800" stroke-width="1.9" stroke-linecap="square"/>
<path d="M122.55 240.75l5.3 5.3l-5.3 5.3l-5.3 -5.3z" fill="#e4e4e4" stroke="#444" stroke-width="0.7"/>
</svg>
  </div>
</div>
</body>
</html>
